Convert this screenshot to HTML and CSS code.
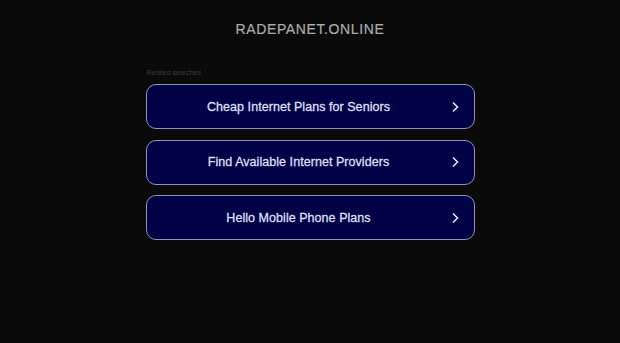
FILE: index.html
```html
<!DOCTYPE html>
<html>
<head>
    <title>radepanet.online</title>
    <link rel="stylesheet" href="styles.css">
</head>
<body>
    <div class="header">
        <h1 class="domain">RADEPANET.ONLINE</h1>
    </div>
    <div class="content">
        <p class="related">Related searches</p>
        <div class="links">
            <a class="link" href="#">
                <span class="link-text">Cheap Internet Plans for Seniors</span>
                <svg class="arrow" width="8" height="12" viewBox="0 0 8 12"><path d="M2 1.5 L6.5 6 L2 10.5" fill="none" stroke="#e0e0f4" stroke-width="1.6"/></svg>
            </a>
            <a class="link" href="#">
                <span class="link-text">Find Available Internet Providers</span>
                <svg class="arrow" width="8" height="12" viewBox="0 0 8 12"><path d="M2 1.5 L6.5 6 L2 10.5" fill="none" stroke="#e0e0f4" stroke-width="1.6"/></svg>
            </a>
            <a class="link" href="#">
                <span class="link-text">Hello Mobile Phone Plans</span>
                <svg class="arrow" width="8" height="12" viewBox="0 0 8 12"><path d="M2 1.5 L6.5 6 L2 10.5" fill="none" stroke="#e0e0f4" stroke-width="1.6"/></svg>
            </a>
        </div>
    </div>
</body>
</html>
```

FILE: styles.css
```css
body {
    margin: 0;
    background-color: #0a0a0a;
    font-family: "Liberation Sans", Arial, sans-serif;
}

.header {
    padding-top: 20px;
    text-align: center;
}

.domain {
    margin: 0;
    font-size: 14px;
    font-weight: normal;
    letter-spacing: 0.62px;
    color: #acacac;
    line-height: 18px;
    -webkit-text-stroke: 0.2px #acacac;
}

.content {
    width: 329px;
    margin: 0 auto;
    padding-top: 31px;
}

.related {
    margin: 0 0 7px 1px;
    font-size: 7px;
    color: #3a3a3a;
    line-height: 8px;
}

.links {
    display: flex;
    flex-direction: column;
    gap: 10.5px;
}

.link {
    display: flex;
    align-items: center;
    box-sizing: border-box;
    height: 45px;
    border: 1px solid #8f93ba;
    border-radius: 10px;
    background-color: #020346;
    text-decoration: none;
    padding: 0 15px 0 0;
}

.link-text {
    flex: 1;
    text-align: center;
    font-size: 12.5px;
    letter-spacing: 0.05px;
    color: #dcdff5;
    -webkit-text-stroke: 0.3px #dcdff5;
}

.arrow {
    display: block;
}
```
